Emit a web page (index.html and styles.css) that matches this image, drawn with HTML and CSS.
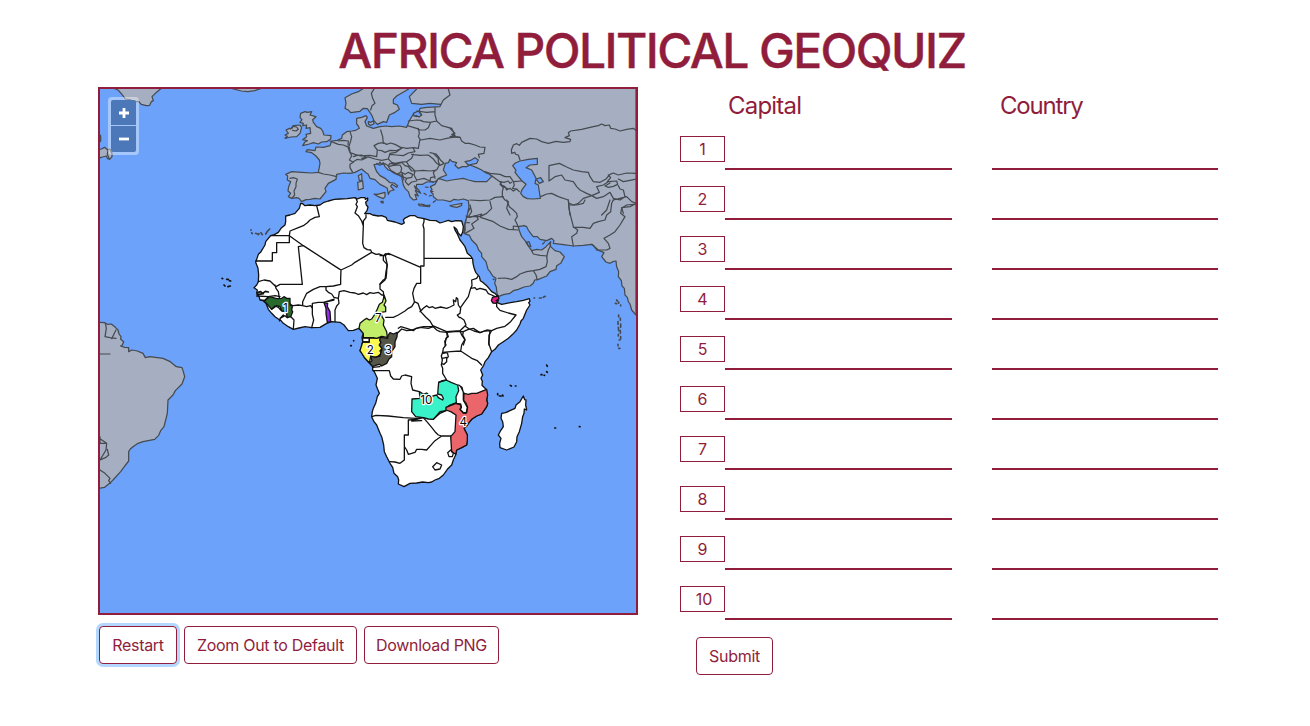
FILE: index.html
```html
<!DOCTYPE html>
<html lang="en">
<head>
<meta charset="utf-8">
<title>Africa Political GeoQuiz</title>
<link rel="stylesheet" href="styles.css">
</head>
<body>
<h1 class="title">AFRICA POLITICAL GEOQUIZ</h1>
<main class="layout">
<section class="map-side">
<div class="map">
<svg class="map-svg" viewBox="300 267 1608 1572">
<!-- Eurasia -->
<g class="land">
<path d="M1908 262V945L1895 930 1890 912 1885 905 1882 892 1875 885 1873 865 1866 858 1864 842 1855 830 1856 815 1850 800 1848 783 1838 785 1830 790 1818 786 1805 770 1812 758 1798 752 1790 750 1782 738 1775 733 1750 736 1720 738 1690 734 1660 730 1662 722 1655 715 1640 722 1620 718 1612 710 1600 710 1592 700 1585 690 1580 680 1572 677 1555 680 1558 692 1565 710 1580 728 1588 742 1595 752 1610 748 1625 750 1638 740 1650 727 1652 740 1665 752 1680 756 1693 770 1682 790 1670 797 1668 808 1650 815 1640 828 1615 838 1604 840 1600 850 1590 858 1572 861 1555 868 1540 872 1530 880 1510 884 1495 890 1491 880 1489 862 1484 850 1488 835 1478 828 1470 815 1464 808 1458 785 1445 770 1445 760 1436 750 1430 735 1415 720 1408 706 1392 700 1395 670 1399 655 1403 640 1407 620 1405 602 1390 597 1375 600 1362 598 1350 605 1330 600 1312 600 1300 590 1299 582 1292 575 1296 568 1291 560 1305 553 1315 535 1340 543 1355 540 1390 535 1405 540 1425 545 1460 545 1475 530 1470 523 1455 517 1445 510 1430 503 1410 495 1400 500 1387 500 1375 505 1365 496 1370 488 1355 484 1350 478 1345 488 1336 490 1330 510 1340 525 1320 533 1305 545 1280 546 1268 553 1250 553 1248 565 1256 572 1246 572 1255 588 1245 583 1250 598 1240 600 1230 590 1225 575 1215 565 1210 555 1205 530 1195 525 1180 515 1165 510 1155 500 1150 488 1144 492 1140 486 1136 492 1122 494 1130 515 1140 527 1155 535 1170 548 1182 549 1193 557 1190 562 1176 553 1172 559 1182 570 1170 573 1165 583 1162 565 1152 559 1140 553 1125 539 1110 535 1104 522 1098 518 1085 507 1065 517 1050 520 1030 519 1010 523 1008 538 985 550 975 565 978 575 960 597 945 595 930 598 918 599 905 605 897 595 890 593 875 595 865 590 872 580 864 573 866 560 872 545 862 540 863 528 857 523 875 515 905 517 935 519 955 517 960 490 958 480 948 468 935 458 918 455 922 449 945 452 948 441 970 442 990 437 995 423 1012 421 1025 415 1027 405 1040 395 1055 393 1067 391 1078 385 1075 378 1070 372 1070 355 1085 352 1098 347 1102 352 1095 365 1100 378 1120 385 1140 380 1158 378 1175 380 1198 378 1220 382 1228 363 1238 345 1250 350 1265 345 1258 335 1260 325 1280 322 1320 320 1322 313 1290 310 1265 313 1235 310 1228 290 1250 267V262Z"/>
<path d="M1095 262L1075 275 1055 282 1035 293 1038 310 1035 325 1045 330 1052 338 1080 334 1090 325 1102 326 1115 345 1122 362 1132 373 1150 365 1160 367 1168 345 1185 337 1198 328 1192 315 1180 310 1180 298 1190 288 1226 267V262Z"/>
<g transform="translate(810 255)">
<path d="M92 85L105 80 112 82 125 80 120 90 138 95 128 104 130 112 140 125 152 130 158 138 162 150 183 152 182 162 170 170 155 171 145 177 130 173 118 177 98 182 104 172 112 167 98 164 110 155 108 148 122 145 120 128 108 130 110 120 98 122 100 115 90 112 96 104 90 98ZM70 122L90 120 95 128 90 145 80 155 62 156 45 160 52 154 45 150 55 145 48 135 58 130 62 132ZM312 327L322 328 345 322 345 335 340 341 325 335ZM263 292L278 288 280 310 265 315ZM265 272L275 266 276 285 268 286ZM445 357L458 358 468 362 480 360 478 365 448 362ZM295 110L303 112 310 107 312 116 303 121 296 118ZM433 303L446 315 452 325 440 317ZM466 306L474 307M483 318L489 320M462 325L469 329M478 333L484 331M490 352L496 347"/>
</g>
<path d="M1350 617L1360 615 1386 610 1384 617 1370 622 1358 620Z"/>
<!-- Atlantic islands and Greenland -->
<g transform="translate(294 255)">
<path d="M48 10L60 15 72 28 82 42 95 44 108 50 122 49 130 58 145 62 155 61 160 50 166 47 162 35 172 25 190 10ZM400 10L430 18 450 20 470 17 490 10ZM0 195L10 192 20 187 28 194 35 192 42 205 42 215 35 223 28 220 25 213 14 216 0 220Z"/>
<path d="M30 195L28 208 33 220M0 145L8 152V168L0 175Z"/>
</g>
<!-- South America -->
<path transform="translate(294 930)" d="M0 37L20 38 28 43 40 42 52 52 60 60 63 72 69 80 68 88 77 95 73 105 68 108 80 112 92 113 92 125 102 120 118 123 135 130 142 143 155 140 195 145 215 154 235 170 252 173 256 185 260 200 252 222 232 242 225 255 210 270 208 310 203 330 198 350 188 362 182 376 170 388 135 395 118 401 105 410 97 417 92 425 92 453 75 475 68 485 45 510 35 520 20 532 0 535Z"/>
</g>
<!-- Inland seas -->
<g class="sea" transform="translate(1350 255)">
<path d="M188 242L196 234 210 228 235 223 262 220V238L240 240 228 248 245 255 252 268 258 280 255 295 265 300 271 340 250 342 232 341 220 335 212 325 216 314 228 298 216 288 205 275 195 262 198 256ZM45 230L60 227 75 218 85 225 80 235 55 240ZM258 282L272 278 280 290 268 295Z"/>
<path transform="translate(-540)" d="M430 85L445 78 455 90 447 96 440 92 432 93Z"/>
</g>
<!-- Eurasian borders -->
<g class="line">
<g transform="translate(810 255)">
<path d="M312 12L304 25 308 40 315 55 306 62 302 75M535 12L540 30 520 45 512 60M495 68V90L500 108 515 122 545 130 550 140 555 155 570 157M440 78L470 82 495 80M415 108L440 105 452 106 460 110 480 112 500 108M412 122L440 130 450 135 465 135 475 128 482 112M445 130L448 145 445 155 452 165 480 160 510 165 530 160 555 156M332 135L338 155 340 175M312 182L325 175 340 173 350 178 362 174 375 178 385 184 395 190 380 197 360 196 345 202 335 197 322 195ZM375 178L390 186 410 190 430 188 445 190 450 162M240 140L245 155 242 168 235 190 240 203 255 208 272 213 285 212 300 211 320 215 322 195M180 168L190 172 205 178 220 180 238 188M205 168L220 166 235 168 234 180M238 188L240 200 245 213 238 225 250 232 240 238 240 248 248 262M250 215L262 211 275 210 290 218 275 225 262 223 250 230M275 220L295 216 315 222 335 226 355 222 360 205 378 202 395 190M360 208L378 210 400 212 415 204 435 200 430 190M355 222L365 232 375 235 395 231 410 230 425 220 430 208M330 240L345 236 355 242 360 235 375 238 395 232M425 208L450 211 475 210 490 222 500 235 508 240 500 255 480 258 460 256 435 258 425 248 415 240 410 230M480 203L498 207 505 215 512 226 522 235 510 241 505 230 505 220 490 205M498 255L490 262 495 280M435 258L432 270 440 285 462 280 480 288 482 278 495 275M480 288L490 292M355 245L370 241 390 240 395 250 392 262 380 268 366 261 360 252ZM395 232L405 242 415 245 425 258 438 258M395 262L405 268 415 262 428 268 425 277 410 280 400 276 395 262M410 280L406 290 415 300 425 291 440 288M380 268L395 270 402 285M145 262L160 267 180 270 200 275M60 280L70 278 82 282 78 295 78 305 72 318 74 330 65 340M66 130L68 124 80 126 85 133 78 138 68 136M320 235L328 240"/>
</g>
<g transform="translate(1350 255)">
<path d="M0 130L15 145 5 148 15 152 0 155 30 157 35 168 45 175 58 175 75 180 90 186 105 187 102 205 85 208 88 218M210 225L205 210 197 208 194 202 185 205 184 195 190 180 200 176 208 181 215 172 240 160 260 162 275 170 295 175 318 169 340 172 360 170 362 163 345 158 358 152 355 143 362 138 395 133 430 125 445 122 455 117 465 122 478 120 482 130 495 132 510 138 530 133 550 130 560 138M297 288V242L328 235 350 246 370 255 395 260 415 262 420 275 430 290 450 292 468 282 480 268 490 264 505 270 530 264 560 265M297 288L315 275 335 270 345 285 370 290 380 305 390 315 410 325 425 332 448 322 440 305 460 300 475 290 500 288 503 298 490 304 475 307 465 303 480 294M272 335L290 327 305 325 325 335 355 345 358 375 360 390M358 355L370 360 385 355 400 340 425 332 440 340 460 335 480 322 490 340 510 345 525 335 520 315 510 312 505 302M505 282L520 290 540 286 560 282M475 270L482 278 472 290M480 345L470 375 455 390M490 345L510 340 530 335 545 350 560 355 540 365 515 368 520 385M105 260L120 265 150 268 165 275 180 275 190 290 215 288M125 272L138 282 150 290 162 292 175 288 180 295 185 292M150 290L155 300 165 305 170 315 180 310 190 318 200 312 208 320M155 290L150 298 160 308 157 320 157 335 165 345 175 350 170 370 180 390M160 305L175 312M190 290L193 300 188 310 200 312M60 345L90 347 120 345 135 337 160 335"/>
</g>
<g transform="translate(1350 600)">
<path d="M55 50L65 35 60 15M50 52L70 49 90 50 110 40 125 25 120 5M60 52L95 42 90 50M45 100L60 92 72 85 65 72 85 58 80 50M92 52L130 65 150 78 175 88 205 90M190 88V78L205 80M170 0L178 20 190 30 200 40 202 50 195 60 200 70 205 80M355 0L357 25 360 40 370 80 383 90 380 100 365 110 370 138M370 82L400 82 420 85 430 70 445 65 465 60 470 45 482 35 485 10 490 0M360 15L380 15 400 10 405 0M425 133L445 150 470 150 480 145 475 130 462 115 480 105 495 95 510 75 525 50 512 40 515 25 530 15 560 12M145 235L165 234 185 238 200 230 210 222 230 215 250 212 258 225 262 240M250 212L270 208 288 200 292 185 290 170 295 150 300 140 302 125M245 152L250 162 270 166 292 168M48 60L44 75 46 90 42 98M50 68L58 68M228 128L237 125 243 140 235 138ZM285 125L278 132M55 35L60 25M48 48L58 52"/>
</g>
<path d="M300 1062L330 1062M316 970L319 985 315 1010 330 1013 348 1015M348 990L335 1016M294 1312L320 1330 318 1350 300 1380M322 1348L326 1365 318 1372 300 1380M300 1410L315 1420 330 1435 326 1442 332 1450M300 1310V1330H316"/>
</g>
<!-- Small archipelagos -->
<g class="specks">
<path d="M752 690h2M755 698l2 3M767 700l6 2M775 704l2-3M783 698l4 6M797 702l6-9M806 690l3-3M1602 894h2M1618 894h6M1630 892l6-3M1850 900l2 3M1856 906v4M1846 910l4 1M1862 915v2M1856 945v6M1861 955v6M1854 965v8M1862 972v10M1855 982l1 10M1861 992v8M1855 1003v5M1862 1010v6M1857 1020h3M1854 1033v4M1860 1045h-4M1480 838h2M1143 605h6M1146 608h3"/>
<path class="dark" d="M666 835l2 1M680 838h5M688 842l4 1M672 855l3 3M684 860l7-2M1052 1037h2M1061 1022v1M1493 1181v3M1498 1188h6M1509 1188l-1-3M1531 1156l3 2M1546 1158h2M1640 1095l2 4M1623 1124h3M1664 1284h3M1738 1280h2M1640 1115l2 2M1632 1126h2"/>
</g>
<!-- Africa -->
<g class="africa">
<path d="M902 610L908 611 915 617 930 615 945 617 960 615 972 607 985 603 1003 598 1020 597 1042 596 1065 593 1072 597 1082 593 1095 593 1096 598 1103 594 1103 601 1097 607 1099 615 1104 621 1101 632 1094 641 1110 641 1118 645 1135 648 1145 647 1158 652 1162 661 1185 666 1205 673 1213 669 1210 660 1214 655 1230 647 1245 647 1252 652 1272 656 1290 661 1308 662 1320 669 1330 666 1345 661 1355 665 1368 662 1385 663 1390 680 1388 696 1383 708 1375 700 1370 688 1362 681 1366 692 1372 702 1380 720 1388 730 1395 740 1402 760 1412 768 1418 777 1419 790 1422 803 1427 817 1438 830 1441 842 1448 847 1460 857 1475 875 1485 880 1492 888 1495 900 1490 907 1505 913 1520 910 1535 907 1550 905 1570 901 1588 896 1590 904 1586 908 1590 915 1580 930 1570 955 1563 963 1560 972 1550 990 1538 1003 1525 1015 1510 1025 1495 1035 1485 1048 1475 1055 1465 1073 1455 1085 1451 1096 1442 1110 1448 1125 1443 1135 1447 1144 1446 1156 1458 1168 1462 1185 1460 1200 1463 1210 1460 1220 1445 1242 1430 1248 1415 1258 1407 1268 1400 1278 1392 1285 1397 1295 1402 1305 1402 1320 1400 1335 1385 1343 1370 1350 1367 1365 1360 1380 1355 1395 1342 1408 1330 1425 1318 1435 1305 1440 1295 1446 1285 1448 1268 1446 1250 1449 1230 1450 1212 1460 1195 1452 1196 1440 1193 1430 1182 1420 1178 1402 1170 1390 1160 1370 1153 1355 1151 1335 1145 1310 1140 1300 1130 1275 1122 1265 1115 1250 1117 1235 1120 1225 1127 1210 1132 1190 1138 1180 1133 1168 1128 1155 1132 1135 1123 1115 1118 1110 1118 1100 1105 1086 1095 1075 1088 1062 1080 1052 1085 1040 1088 1025 1086 1012 1090 1000 1077 985 1060 991 1045 992 1038 983 1032 975 1020 967 995 965 980 970 960 982 935 983 915 980 897 984 880 988 865 980 850 970 843 962 835 957 825 950 815 940 805 928 798 910 790 903 780 900 777 890 770 880 772 870 762 863 770 855 775 845 776 825 774 805 767 787 775 763 783 755 795 735 797 725 812 707 823 704 835 697 843 685 855 675 857 665 857 648 870 645 885 640 892 632 898 625Z"/>
<path transform="translate(1020 960)" d="M550 228L554 239 558 240 557 255 560 270 553 267 552 280 548 290 545 310 538 335 531 350 530 365 522 381 500 390 480 383 479 370 483 355 475 345 480 335 490 320 488 305 483 295 485 280 497 278 510 272 525 265 528 255 540 245Z"/>
<g transform="translate(1020 960)">
<path fill="#3af2c9" d="M296 187L304 183 318 180 335 188 353 195 356 212 348 230 349 248 330 255 320 262 318 272 300 280 280 298 265 297 250 293 227 290 215 275 216 237 240 235 238 215 250 222 260 219 272 230 290 225 295 233 308 240 310 235 305 225 293 222Z"/>
<path fill="#eb666b" d="M372 220L385 223 395 220 410 220 440 208 443 225 440 240 443 250 440 260 425 282 410 288 395 298 387 308 380 318 372 325 377 335 382 345 382 360 380 375 365 383 350 390 347 403 335 395 332 350 345 335 348 285 332 275 318 270 318 262 348 250 362 255 364 262 360 268 370 279 378 280 383 262 377 248 371 242Z"/>
<path fill="#fbf950" d="M68 66L88 66V54L105 54 122 52 119 60 123 67 118 75 126 85 120 93 125 100 115 108 105 112 92 108 90 120 88 128 75 115 60 92Z"/>
<path fill="#555648" d="M172 37L171 50 165 65 165 80 155 95 155 110 147 117 140 130 125 138 118 133 110 135 98 140 88 128 96 122 92 108 105 112 120 108 126 85 118 75 123 67 119 60 122 52 143 55 144 47 150 38 160 42Z"/>
</g>
<g transform="translate(720 555)">
<path fill="#c1ed6a" d="M357 430L360 415 372 405 380 400 388 405 395 402 405 387 412 372 418 358 427 352 433 332 438 348 432 360 437 366 437 380 423 382 426 395 432 405 430 420 440 440 442 457 425 454 410 460 400 458 370 458 370 445Z"/>
<path fill="#28692d" d="M73 348L85 335 100 338 110 341 125 340 132 335 140 340 150 340 150 355 157 365 155 375 158 380 152 395 142 398 138 380 125 378 120 365 110 362 95 373Z"/>
<path fill="#972bea" d="M252 353L263 355 262 365 270 380 272 410 262 413 258 385 258 370Z"/>
</g>
<path fill="#f0198f" transform="translate(1140 555)" d="M337 338L343 335 349 335 354 332 357 341 348 347 354 349 349 355 339 354 334 347Z"/>
</g>
<g class="border">
<g transform="translate(720 555)">
<path d="M230 62L234 78 238 95 225 97 210 105 202 113 190 122 175 128 150 138 148 152 190 182 295 250 303 255 302 280 302 298 280 303 258 305 240 305 220 313 200 325 188 350 188 362M92 152H148V173H110V203H97V228H47M190 182L175 185 187 298 120 298 108 305 90 288 72 285 55 290M303 255L335 240 345 232 395 202 392 195 382 194 372 188 368 175 370 122 365 108 355 92 345 84 352 65 348 58 352 50 348 40M370 122L370 108 378 98 378 90M395 202L408 208 418 207 430 212 437 206 450 209M430 212L430 226 441 238 440 262 438 280 430 285 420 297 420 312 430 320 432 340M298 320L312 317 330 322 345 324 355 328 370 324 380 329 390 323 400 325 415 322 425 330 432 330M258 305L258 315 265 322 275 327 282 337 295 340 298 320M295 340L297 355 290 363 285 375 285 410M217 355L235 352 250 352 268 347 282 342M188 362L200 365 212 362 217 370 217 355 217 388 221 405 215 428M188 362L175 360 160 362 150 360M152 395L157 400 162 405 160 432M120 400L135 392 142 398M95 373L105 363 115 367 122 375M118 408L122 398 130 390M105 300L108 310 115 320 118 338M50 333L85 335 105 332 120 335M62 345L75 346 85 338M262 350L282 345"/>
<path class="thick" d="M52 323L62 320 68 325 76 319 85 321M52 329L70 326"/>
</g>
<g transform="translate(1140 555)">
<path d="M132 101V110L129 120 132 132V243H122M132 220H275M0 212L15 212 25 205 122 247V295H110L102 310 98 325 100 335 103 350 114 355 122 378M15 208L22 240 18 260 15 285 0 298M120 380L130 370 140 362 148 368 158 365 165 370 182 366 200 370 210 366 222 360 220 345 227 350 229 338 233 341 235 360 242 370 240 385 232 390 238 398M242 367L252 353 265 335 272 310 276 302 275 285 290 280 294 273M272 310L285 308 290 314 300 310 318 315 325 326 335 330 345 335M17 397L40 397 55 390 75 378 85 370 95 365 103 352M120 370L122 380 137 396 150 408 158 422 165 425 200 440 240 437 258 420 252 405 240 397M55 430L62 425 80 430 100 437 108 430 130 425 165 425M350 353L350 365 360 376 385 384 408 390 390 412 375 424 350 430 335 437 320 435 300 443 282 438 268 432 258 425M335 437L327 450V480M200 440L205 455 198 460 195 480M240 437L245 450 255 465 250 480"/>
</g>
<g transform="translate(1020 960)">
<path d="M172 40L185 27 200 32 215 30 240 22 265 25 280 20 290 30 300 35 320 37 345 35 370 35 385 28 400 25 420 38 435 33 450 32M320 37L322 50 314 65 318 75 310 85 308 97 332 95 362 93 395 115 412 122 425 135M370 35L368 45 375 58 365 75 362 93M450 32L446 70 455 95M308 97L304 108 307 120 304 135 308 145 308 160 320 180M308 100L322 98 325 110 320 116 320 125 312 133 308 132M307 115L320 112M320 180L296 187M356 195L366 202 370 218 370 240 382 262 380 278 370 278 360 268 364 262 362 252 348 250M100 152L148 152 152 168 160 177 180 178 185 168 195 165 215 170 213 190 218 210 238 215M95 290L108 286 145 288 190 293 227 295 250 293M205 300L230 298 250 293 265 310 275 322 285 335 295 345 305 348 332 348M205 300V345H193V420L180 430 165 426 150 425M193 380L200 390 205 403 225 397 230 388 245 388 260 390 275 373 285 362 305 348M280 298L300 275 318 272M372 220L362 200M323 398L332 390 340 400 337 410 327 410ZM278 440L290 428 305 435 300 447 285 450ZM98 142L120 140M215 303L245 302M68 66V54H88V66Z"/>
</g>
</g>
<g class="labels">
<text x="856" y="935">1</text><text x="1135" y="967">7</text><text x="1111" y="1062">2</text><text x="1165" y="1062">3</text><text x="1279" y="1212">10</text><text x="1390" y="1279">4</text>
</g>
</svg>
<div class="zoom"><button class="zoom-btn zoom-in" aria-label="Zoom in"><svg viewBox="0 0 10 10"><path d="M5 0v10M0 5h10"/></svg></button><button class="zoom-btn zoom-out" aria-label="Zoom out"><svg viewBox="0 0 10 10"><path d="M0 5h10"/></svg></button></div>
</div>
<div class="actions"><button class="btn focused">Restart</button><button class="btn zoom-default">Zoom Out to Default</button><button class="btn download">Download PNG</button></div>
</section>
<form class="quiz">
<div class="head"><span class="capital">Capital</span><span class="country-head">Country</span></div>
<div class="row"><label class="num">1</label><input class="answer" aria-label="Capital 1"><input class="answer country" aria-label="Country 1"></div>
<div class="row"><label class="num">2</label><input class="answer" aria-label="Capital 2"><input class="answer country" aria-label="Country 2"></div>
<div class="row"><label class="num">3</label><input class="answer" aria-label="Capital 3"><input class="answer country" aria-label="Country 3"></div>
<div class="row"><label class="num">4</label><input class="answer" aria-label="Capital 4"><input class="answer country" aria-label="Country 4"></div>
<div class="row"><label class="num">5</label><input class="answer" aria-label="Capital 5"><input class="answer country" aria-label="Country 5"></div>
<div class="row"><label class="num">6</label><input class="answer" aria-label="Capital 6"><input class="answer country" aria-label="Country 6"></div>
<div class="row"><label class="num">7</label><input class="answer" aria-label="Capital 7"><input class="answer country" aria-label="Country 7"></div>
<div class="row"><label class="num">8</label><input class="answer" aria-label="Capital 8"><input class="answer country" aria-label="Country 8"></div>
<div class="row"><label class="num">9</label><input class="answer" aria-label="Capital 9"><input class="answer country" aria-label="Country 9"></div>
<div class="row"><label class="num ten">10</label><input class="answer" aria-label="Capital 10"><input class="answer country" aria-label="Country 10"></div>
<button type="button" class="btn submit">Submit</button>
</form>
</main>
</body>
</html>
```
FILE: styles.css
```css
* { box-sizing: border-box; }
body { margin: 0; background: #fff; color: #901d3b; font: 16px/24px Inter, "Liberation Sans", sans-serif; }
.title { margin: 0; padding: 22px 6px 0 0; height: 87px; text-align: center; font-size: 48px; line-height: 58px; font-weight: 500; letter-spacing: -1.6px; -webkit-text-stroke: .4px #901d3b; }
.layout { display: flex; padding-left: 98px; }
.map-side { width: 540px; margin-right: 42px; }
.map { position: relative; width: 540px; height: 528px; border: 2px solid #901d3b; background: #6ca2f9; overflow: hidden; }
.map-svg { display: block; width: 536px; height: 524px; stroke-linejoin: round; stroke-linecap: round; }
.land { fill: #a6afc1; stroke: #454a50; stroke-width: 3.7; }
.sea { fill: #6ca2f9; stroke: #454a50; stroke-width: 3.7; }
.line { fill: none; stroke: #454a50; stroke-width: 3.7; }
.specks { fill: none; stroke: #444b55; stroke-width: 5; }
.dark { stroke: #111; stroke-width: 5; }
.africa { fill: #fff; stroke: #111; stroke-width: 3.9; }
.border { fill: none; stroke: #111; stroke-width: 3.9; }
.thick { stroke-width: 5; }
.labels { font: 35px Inter, sans-serif; text-anchor: middle; fill: #000; stroke: #fff; stroke-width: 7px; paint-order: stroke; }
.zoom { position: absolute; left: 8px; top: 8px; width: 31px; height: 58px; padding: 3px; border-radius: 4px; background: rgba(255,255,255,.4); display: flex; flex-direction: column; gap: 1px; }
.zoom-btn { width: 25px; height: 25px; padding: 0; border: 0; background: #4c78ba; display: flex; align-items: center; justify-content: center; }
.zoom-in { border-radius: 2px 2px 0 0; }
.zoom-out { height: 26px; border-radius: 0 0 2px 2px; }
.zoom-btn svg { width: 10px; height: 10px; stroke: #fff; stroke-width: 2.8; }
.actions { display: flex; padding: 11px 0 0 1px; }
.btn { height: 38px; border: 1px solid #901d3b; border-radius: 4px; background: #fff; color: #901d3b; font: 16px/24px Inter, sans-serif; letter-spacing: -.3px; padding: 0; text-align: center; white-space: nowrap; }
.focused { width: 78px; box-shadow: 0 0 0 3px #b3d7ff; }
.zoom-default { width: 173px; margin-left: 7px; }
.download { width: 135px; margin-left: 7px; }
.quiz { width: 538px; }
.head { display: flex; height: 49px; padding: 4px 0 0 48px; font-size: 24px; line-height: 30px; letter-spacing: -.8px; }
.capital { width: 272px; }
.country-head { letter-spacing: -1.2px; }
.row { display: flex; height: 50px; }
.num { width: 45px; height: 26px; border: 1px solid #901d3b; text-align: center; line-height: 25px; }
.ten { padding-left: 3px; }
.answer { width: 227px; height: 34px; border: 0; border-bottom: 2px solid #901d3b; background: transparent; outline: 0; padding: 0; }
.country { margin-left: 40px; width: 226px; }
.submit { width: 77px; margin: 1px 0 0 16px; }
```
